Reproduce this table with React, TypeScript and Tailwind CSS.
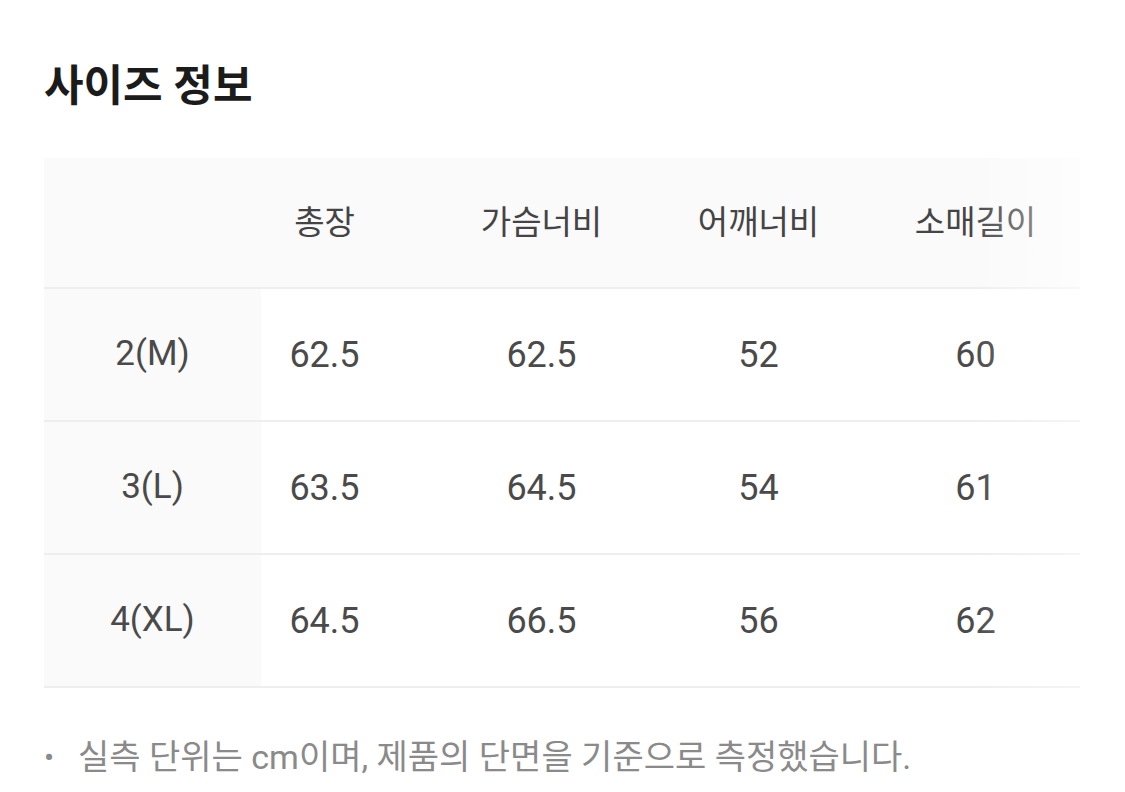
import React from 'react';

const headers = ['총장', '가슴너비', '어깨너비', '소매길이'];

const rows = [
  { size: '2(M)', values: ['62.5', '62.5', '52', '60'] },
  { size: '3(L)', values: ['63.5', '64.5', '54', '61'] },
  { size: '4(XL)', values: ['64.5', '66.5', '56', '62'] },
];

const font = { fontFamily: 'Roboto, "Noto Sans CJK KR", sans-serif' };

export default function App() {
  return (
    <div className="w-[1125px] h-[792px] bg-white overflow-hidden" style={font}>
      <h1 className="pl-[44px] pt-[58px] h-[158px] text-[43px] font-bold text-[#1b1b1b] leading-[56px]">사이즈 정보</h1>

      <div className="relative ml-[44px] w-[1036px] overflow-hidden">
        {/* header */}
        <div className="flex h-[131px] bg-[#fafafa] border-b-2 border-[#eeeeee]">
          <div className="w-[217px] shrink-0" />
          {headers.map((h) => (
            <div key={h} className="w-[217px] shrink-0 pr-[90px] flex items-center justify-center text-[33px] text-[#444]">
              <span className="whitespace-nowrap">{h}</span>
            </div>
          ))}
        </div>

        {rows.map((r) => (
          <div key={r.size} className="flex h-[133px] border-b-2 border-[#eeeeee]">
            <div className="w-[217px] shrink-0 bg-[#fafafa] flex items-center justify-center text-[35px] text-[#4a4a4a]">
              {r.size}
            </div>
            {r.values.map((v, i) => (
              <div key={i} className="w-[217px] shrink-0 pr-[90px] flex items-center justify-center text-[36px] text-[#4a4a4a]">
                {v}
              </div>
            ))}
          </div>
        ))}

        {/* right edge fade */}
        <div className="absolute top-0 right-0 h-[131px] w-[110px] bg-gradient-to-r from-transparent to-white/60" />
        <div className="absolute top-[133px] right-0 bottom-0 w-[110px] bg-gradient-to-r from-transparent to-white/40" />
      </div>

      <div className="flex items-center pl-[44px] mt-[44px] text-[34px] text-[#8a8a8a]">
        <span className="w-[34px] text-[30px] leading-none">•</span>
        <span className="whitespace-nowrap">실측 단위는 cm이며, 제품의 단면을 기준으로 측정했습니다.</span>
      </div>
    </div>
  );
}
